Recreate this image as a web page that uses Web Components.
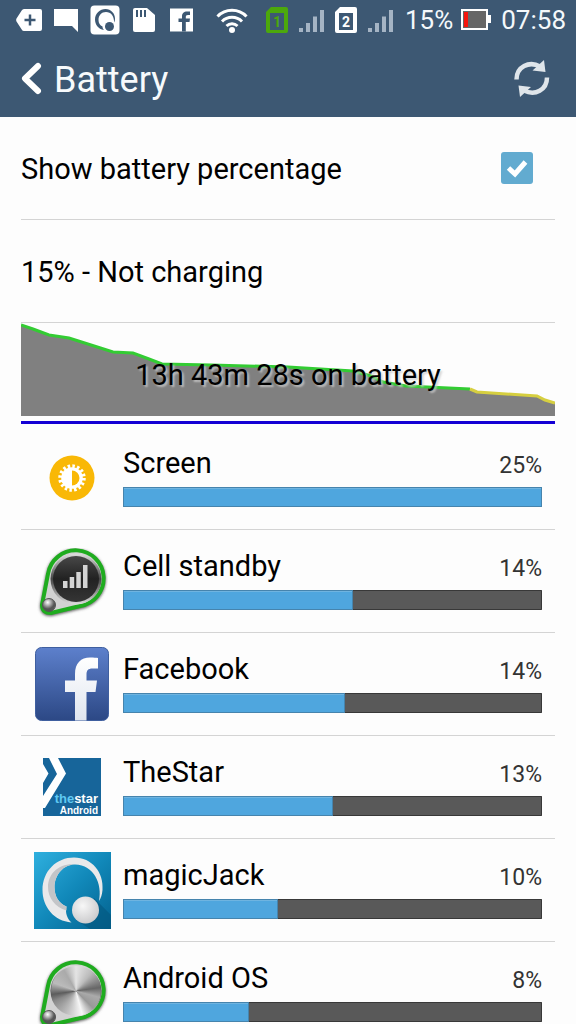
<!DOCTYPE html>
<html lang="en">
<head>
<title>Battery</title>
<meta charset="utf-8"/>
<meta name="viewport" content="width=device-width, initial-scale=1"/>

<style>
html, body { height: 100%; }

body {
  margin: 0;
  background-color: #fdfdfd;
  color: #000;
  font-family: Roboto, "Liberation Sans", sans-serif;
  font-size: 29px;
  line-height: 34px;
}
</style>
</head>

<body>

<battery-screen></battery-screen>

<template id="battery-screen-template">
<style>
:host {
  display: flex;
  flex-direction: column;
  height: 100%;
}

header { flex: none; background-color: #3d5873; }

main {
  flex: 1;
  min-height: 0;
  overflow-y: auto;
  scrollbar-width: none;
  padding: 0 21px;
}

app-usage svg { display: block; }
</style>

<header>
<status-bar></status-bar>
<action-bar>Battery</action-bar>
</header>

<main>
<setting-row><label for="show-percentage">Show battery percentage</label><check-box id="show-percentage" slot="control"></check-box></setting-row>
<setting-row>15% - Not charging</setting-row>
<battery-chart>13h 43m 28s on battery</battery-chart>

<app-usage name="Screen" percent="25" level="100">
<svg width="46" height="46" viewBox="0 0 46 46">
  <circle cx="23" cy="23" r="22.5" fill="#f9b806"/>
  <circle cx="23" cy="23" r="11.5" fill="none" stroke="#fff" stroke-width="4.5" stroke-dasharray="2.4 2.116"/>
  <circle cx="23" cy="23" r="10.8" fill="#fff"/>
  <path d="M23 15.500a7.500 7.500 0 0 1 0 15z" fill="#f9b806"/>
</svg>
</app-usage>

<app-usage name="Cell standby" percent="14" level="55">
<metal-badge><svg width="28" height="26" viewBox="0 0 28 26" fill="#d4d4d4"><path d="M1 17h4.500v7H1zM7.700 13h4.500v11H7.700zM14.300 8h4.500v16h-4.500zM21 1h4.500v23H21z"/></svg></metal-badge>
</app-usage>

<app-usage name="Facebook" percent="14" level="53">
<svg width="76" height="76" viewBox="0 0 76 76">
  <defs>
    <linearGradient id="fb" x2="0" y2="1"><stop offset="0" stop-color="#5d80cc"/><stop offset="1" stop-color="#2c4885"/></linearGradient>
    <linearGradient id="fb-letter" x2="0" y2="1"><stop offset="0" stop-color="#fff"/><stop offset="1" stop-color="#dfe5ef"/></linearGradient>
  </defs>
  <rect x="1.500" y="1.500" width="73" height="73" rx="6" fill="url(#fb)" stroke="#3f5f9f"/>
  <path d="M41 74.500V46H31V34.500h10V28c0-11 6-16.500 15-16.500 4 0 6.500.200 8 .500v10.500h-5.500c-4.500 0-6 2-6 6v6H63L61.500 46h-9v28.500z" fill="url(#fb-letter)"/>
</svg>
</app-usage>

<app-usage name="TheStar" percent="13" level="50">
<svg width="58" height="58" viewBox="0 0 58 58">
  <rect width="58" height="58" fill="#17659a"/>
  <path d="M6 0h9l8 15.500L2 50H0V38L14 16zM0 6l5.500 9.500L0 25z" fill="#fff"/>
  <text x="55" y="45" text-anchor="end" font-family="Liberation Sans, sans-serif" font-size="13" font-weight="700" fill="#fff"><tspan fill="#5fc9f3">the</tspan>star</text>
  <text x="55" y="56" text-anchor="end" font-family="Liberation Sans, sans-serif" font-size="10" font-weight="700" fill="#fff">Android</text>
</svg>
</app-usage>

<app-usage name="magicJack" percent="10" level="37">
<svg width="77" height="77" viewBox="0 0 77 77">
  <defs>
    <linearGradient id="mj" x2="1" y2="1"><stop offset="0" stop-color="#2fb0df"/><stop offset=".5" stop-color="#1188b9"/><stop offset="1" stop-color="#03628f"/></linearGradient>
    <radialGradient id="mj-ball" cx=".4" cy=".35" r=".7"><stop offset="0" stop-color="#f7f7f7"/><stop offset="1" stop-color="#c9c9cb"/></radialGradient>
  </defs>
  <rect width="77" height="77" fill="url(#mj)"/>
  <path d="M60 46L77 63V77H56L42 68z" fill="#03567f" opacity=".6"/>
  <path d="M37.500 70.500C20 69 8.500 55 8.500 38 8.500 19 22.500 5.500 40 5.500c18 0 30 15 28.500 32.500-.500 5-1.500 8-3.500 11 3.500-17-5-36-24-36.500-11.500 0-20.500 10-20.500 23 0 9 4.500 16 12 19-1.500 6 .500 12 5 16z" fill="#e9e9ea"/>
  <path d="M41 12.500c-11.500 0-20.500 10-20.500 23 0 9 4.500 16 12 19v4C21 55 14 46 14 35 14 22 25 11 41 12.500z" fill="#c3c5c8"/>
  <circle cx="51.500" cy="58" r="13.500" fill="url(#mj-ball)"/>
</svg>
</app-usage>

<app-usage name="Android OS" percent="8" level="30">
<metal-badge finish="steel"></metal-badge>
</app-usage>
</main>
</template>

<template id="status-bar-template">
<style>
:host {
  display: flex;
  align-items: center;
  justify-content: space-between;
  height: 40px;
  padding: 0 10px 0 16px;
  color: #f4f8fb;
  font-size: 26px;
  line-height: 40px;
}

div { display: flex; align-items: center; }
.notices { gap: 11px; }
.system { gap: 8px; }
svg { display: block; }
.sim { fill: #fff; }
.sim.active { fill: #4ca80c; }
.sim text { font: 700 14px Roboto, sans-serif; }
.sims { gap: 10px; margin: 0 3px 0 10px; }
.signal { fill: #a5b4c4; }
time { margin-left: 2px; }
</style>

<div class="notices">
<svg width="26" height="24" viewBox="0 0 26 24"><path d="M8 1h16q2 0 2 2v18q0 2-2 2H8q-1.500 0-2.300-1.500L.500 13.500q-.700-1.500 0-3L5.700 2.500Q6.500 1 8 1z" fill="#fff"/><path d="M8.500 12h11M14 6.500v11" stroke="#3d5873" stroke-width="2.500"/></svg>
<svg width="26" height="24" viewBox="0 0 26 24"><path d="M1 1h24v23l-6-6H1z" fill="#fff"/></svg>
<svg width="30" height="30" viewBox="0 0 30 30"><rect x=".5" y=".5" width="29" height="29" rx="4" fill="#fff"/><path d="M14 25C8 24 5 19.500 5 14.500 5 8.500 10 4 15.500 4S25 8.500 25 13.500c0 1.500-.300 3-.800 4C24 11 21 7 16 7c-4.500 0-7.500 3.500-7.500 8 0 3 1.500 5.500 4 6.500 0 1.500.500 2.500 1.500 3.500z" fill="#3d5873"/><circle cx="19.500" cy="21.500" r="4.500" fill="#3d5873"/></svg>
<svg width="26" height="24" viewBox="0 0 26 24"><path d="M4 0h12l8 7v15q0 2-2 2H4q-2 0-2-2V2q0-2 2-2z" fill="#fff"/><path d="M6 2v7M10 2v7M14 2v7" stroke="#3d5873" stroke-width="2"/></svg>
<svg width="26" height="24" viewBox="0 0 26 24"><path d="M2 .5h23v23H2z" fill="#fff"/><path d="M14 23.500V14h-3.500v-3.500H14V8.500c0-3.500 2-5 5-5h3V7h-2c-1.700 0-2.200.700-2.200 2v1.500H22L21.500 14h-3.700v9.500z" fill="#3d5873"/></svg>
</div>

<div class="system">
<svg width="32" height="26" viewBox="0 0 32 26"><g fill="none" stroke="#fff" stroke-width="3"><path d="M1.500 9.500a20 20 0 0 1 29 0"/><path d="M6 14.500a14 14 0 0 1 20 0"/><path d="M10.500 19a8 8 0 0 1 11 0"/></g><circle cx="16" cy="23" r="3" fill="#fff"/></svg>
<div class="sims">
<svg class="sim active" width="22" height="26" viewBox="0 0 22 26"><path fill-rule="evenodd" d="M5 0h15q2 0 2 2v22q0 2-2 2H2q-2 0-2-2V5zM4 6v17h14V6z"/><text x="11" y="20" text-anchor="middle">1</text></svg>
<svg class="signal" width="27" height="26" viewBox="0 0 27 26"><path d="M1 21h4v4H1zM8 16h4v9H8zM15 9.500h4V25h-4zM22 3h4v22h-4z"/></svg>
<svg class="sim" width="22" height="26" viewBox="0 0 22 26"><path fill-rule="evenodd" d="M5 0h15q2 0 2 2v22q0 2-2 2H2q-2 0-2-2V5zM4 6v17h14V6z"/><text x="11" y="20" text-anchor="middle">2</text></svg>
<svg class="signal" width="27" height="26" viewBox="0 0 27 26"><path d="M1 21h4v4H1zM8 16h4v9H8zM15 9.500h4V25h-4zM22 3h4v22h-4z"/></svg>
</div>
<span>15%</span>
<svg width="30" height="22" viewBox="0 0 30 22"><path d="M26 6h4v8h-4z" fill="#fff"/><rect x="1" y="1" width="25" height="19" fill="#666" stroke="#fff" stroke-width="2"/><path d="M3 3h4v15H3z" fill="#f6150c"/></svg>
<time>07:58</time>
</div>
</template>

<template id="action-bar-template">
<style>
:host {
  display: flex;
  align-items: center;
  justify-content: space-between;
  height: 77px;
  padding: 0 24px 0 20px;
  color: #f7fafc;
}

h1 { margin: 0; padding-top: 2px; font-size: 36px; font-weight: 400; line-height: 44px; }

button {
  display: flex;
  align-items: center;
  gap: 12px;
  padding: 0;
  border: 0;
  background: none;
  color: inherit;
  font: inherit;
  cursor: pointer;
}
</style>

<button aria-label="Navigate up">
<svg width="22" height="34" viewBox="0 0 22 34"><path d="M18 4L5 16.500 18 29" fill="none" stroke="#fff" stroke-width="6" stroke-linecap="round" stroke-linejoin="round"/></svg>
<h1><slot></slot></h1>
</button>

<button aria-label="Refresh">
<svg width="40" height="40" viewBox="0 0 40 40"><g fill="none" stroke="#dfe5ea" stroke-width="4.500"><path d="M4.500 20.500C4.500 8 17 1.500 28 7.500"/><path d="M35 18.500c0 12.500-12 18.500-23 13"/></g><path d="M32 1l1.500 12-13-1.500zM8 38L6.500 26.500l12.500 1.500z" fill="#dfe5ea"/></svg>
</button>
</template>

<template id="setting-row-template">
<style>
:host {
  display: flex;
  align-items: center;
  justify-content: space-between;
  height: 102px;
  padding-right: 22px;
  border-bottom: 1px solid #d4d4d4;
}

span { padding-top: 2px; }
</style>
<span><slot></slot></span>
<slot name="control"></slot>
</template>

<template id="check-box-template">
<style>
:host { display: block; line-height: 0; }

input {
  appearance: none;
  width: 32px;
  height: 32px;
  margin: 0;
  border-radius: 3px;
  background-color: #c8c8c8;
}

input:checked { background-color: #62abd0; }
label { display: grid; }
label > * { grid-area: 1 / 1; }
svg { pointer-events: none; }
input:not(:checked) + svg { display: none; }
</style>
<label>
<input type="checkbox" aria-label="Show battery percentage" checked/>
<svg width="32" height="32" viewBox="0 0 32 32"><path d="M7.500 16l6.500 6L24.500 10" fill="none" stroke="#fff" stroke-width="5"/></svg>
</label>
</template>

<template id="battery-chart-template">
<style>
:host { display: grid; height: 104px; }
svg, span { grid-area: 1 / 1; }
svg { width: 100%; height: 104px; }

span {
  align-self: center;
  justify-self: center;
  text-shadow: 2px 2px 2px rgba(204, 204, 204, 0.8);
}
</style>
<svg viewBox="0 0 534 104" preserveAspectRatio="none">
  <path class="area" fill="#808080"/>
  <path class="ok" fill="none" stroke="#3c3" stroke-width="3"/>
  <path class="low" fill="none" stroke="#d6cf40" stroke-width="3"/>
  <path d="M0 99.500h534" stroke="#1400d4" stroke-width="3"/>
</svg>
<span><slot></slot></span>
</template>

<template id="app-usage-template">
<style>
:host {
  display: flex;
  height: 102px;
  border-bottom: 1px solid #d4d4d4;
}

.icon {
  flex: none;
  display: flex;
  align-items: center;
  justify-content: center;
  width: 102px;
}

.usage {
  flex: 1;
  display: flex;
  flex-direction: column;
  gap: 7px;
  padding: 19px 13px 22px 0;
}

.text {
  display: flex;
  justify-content: space-between;
  align-items: baseline;
  height: 34px;
}

.percent { color: #333; font-size: 23px; }

progress {
  appearance: none;
  flex: none;
  display: block;
  width: 100%;
  height: 20px;
}

progress::-webkit-progress-bar {
  box-sizing: border-box;
  border-radius: 1px;
  background-color: #595959;
  box-shadow: inset 0 0 0 1px #383838;
}

progress::-webkit-progress-value {
  background-color: #4fa6de;
  box-shadow: inset 0 0 0 1px #4684ad, inset 0 2px 0 0 #6fb4e0;
}
</style>
<div class="icon"><slot></slot></div>
<div class="usage">
<div class="text"><label class="name" for="level"></label><span class="percent"></span></div>
<progress id="level" max="100"></progress>
</div>
</template>

<template id="metal-badge-template">
<style>
:host { display: grid; padding-top: 9px; line-height: 0; }
svg { grid-area: 1 / 1; }
.glyph { grid-area: 1 / 1; padding: 16px 0 0 26px; }
.steel { display: none; }
:host([finish="steel"]) .steel { display: block; }

.disc {
  grid-area: 1 / 1;
  width: 50px;
  height: 50px;
  margin: 6px 0 0 15px;
  border-radius: 50%;
  background: conic-gradient(#e4e4e4, #bbb 40deg, #666 82deg, #aaa 105deg, #999 135deg, #f6f6f6 165deg, #bbb 205deg, #888 245deg, #5c5c5c 262deg, #bbb 290deg, #aaa 330deg, #e4e4e4);
}
</style>
<svg width="72" height="76" viewBox="0 0 72 76">
  <defs>
    <linearGradient id="ring" x2="0" y2="1"><stop offset="0" stop-color="#e0e0e0"/><stop offset=".5" stop-color="#444"/><stop offset="1" stop-color="#ddd"/></linearGradient>
    <linearGradient id="face" x2="0" y2="1"><stop offset="0" stop-color="#484848"/><stop offset=".5" stop-color="#222"/><stop offset="1" stop-color="#353535"/></linearGradient>
    <radialGradient id="knob" cx=".4" cy=".3"><stop offset="0" stop-color="#fff"/><stop offset="1" stop-color="#555"/></radialGradient>
    <filter id="shade" x="-20%" y="-20%" width="140%" height="140%"><feGaussianBlur stdDeviation="1.500"/></filter>
  </defs>
  <path d="M12 27A28 28 0 1 1 44 59L15 66Q6 66 6 58z" fill="#555" stroke="#555" stroke-width="4" filter="url(#shade)"/>
  <path d="M12 26A28 28 0 1 1 44 58L15 65Q6 65 6 57z" fill="#d2d2d2" stroke="#1fac1f" stroke-width="4"/>
  <circle cx="40" cy="31" r="25.500" fill="url(#ring)"/>
  <circle cx="40" cy="31" r="23" fill="url(#face)"/>
  <circle cx="13" cy="57" r="6.500" fill="url(#knob)" stroke="#555"/>
</svg>
<div class="disc steel"></div>
<div class="glyph"><slot></slot></div>
</template>

<script>

// Base for the elements: clones the template that carries the tag's name.
class TemplateElement extends HTMLElement {
  constructor() {
    super()
    this.attachShadow({mode: 'open'})
    const template = document.getElementById(`${this.localName}-template`)
    this.shadowRoot.appendChild(template.content.cloneNode(true))
  }
}

class StatusBar extends TemplateElement {}
class ActionBar extends TemplateElement {}
class SettingRow extends TemplateElement {}
class MetalBadge extends TemplateElement {}
class BatteryScreen extends TemplateElement {}

class CheckBox extends TemplateElement {
  // Lets an outer label reach the input inside.
  static get formAssociated() {
    return true
  }

  constructor() {
    super()
    this.addEventListener('click', event => {
      if (event.composedPath()[0] === this) {
        this.shadowRoot.querySelector('input').click()
      }
    })
  }
}

class AppUsage extends TemplateElement {
  static get observedAttributes() {
    return ['name', 'percent', 'level']
  }

  attributeChangedCallback(name, oldValue, newValue) {
    switch(name) {
      case 'name':
        this.shadowRoot.querySelector('.name').textContent = newValue
        break
      case 'percent':
        this.shadowRoot.querySelector('.percent').textContent = `${newValue}%`
        break
      case 'level':
        this.shadowRoot.querySelector('progress').value = newValue
        break
    }
  }
}

// Charge history as [x, y] points; the line turns yellow from lowFrom on.
const history = [
  [0, 2], [12, 6], [28, 12], [48, 15], [70, 22], [92, 29], [112, 30],
  [128, 36], [141, 41], [190, 42], [267, 44], [332, 48], [350, 53],
  [362, 59], [385, 63], [449, 66], [456, 69], [516, 73], [524, 77], [534, 80]
]
const lowFrom = 15

class BatteryChart extends TemplateElement {
  connectedCallback() {
    const line = points => 'M' + points.map(p => p.join(' ')).join('L')
    const root = this.shadowRoot
    root.querySelector('.area').setAttribute('d', `${line(history)}V93H0z`)
    root.querySelector('.ok').setAttribute('d', line(history.slice(0, lowFrom + 1)))
    root.querySelector('.low').setAttribute('d', line(history.slice(lowFrom)))
  }
}

window.customElements.define('status-bar', StatusBar)
window.customElements.define('action-bar', ActionBar)
window.customElements.define('setting-row', SettingRow)
window.customElements.define('check-box', CheckBox)
window.customElements.define('metal-badge', MetalBadge)
window.customElements.define('battery-chart', BatteryChart)
window.customElements.define('app-usage', AppUsage)
window.customElements.define('battery-screen', BatteryScreen)

</script>

</body>

</html>
